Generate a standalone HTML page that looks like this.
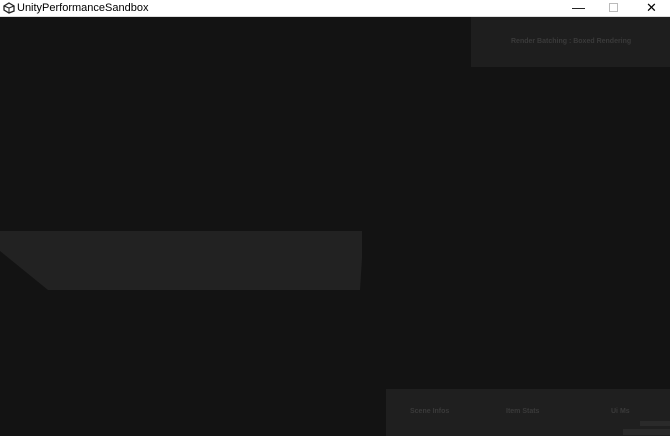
<!DOCTYPE html>
<html><head><meta charset="utf-8"><style>
*{margin:0;padding:0;box-sizing:border-box}
body{width:670px;height:436px;overflow:hidden;background:#131313;font-family:"Liberation Sans",sans-serif;position:relative}
.tb{position:absolute;left:0;top:0;width:670px;height:17px;background:#fff;border-bottom:1px solid #ddd}
.tb .t{position:absolute;left:17px;top:2px;font-size:11px;color:#000}
.p{position:absolute;background:#1e1e1e;color:#3a3a3a;font-size:7px;font-weight:bold}
</style></head><body>
<div class="tb">
<svg style="position:absolute;left:3px;top:2px" width="12" height="12" viewBox="0 0 12 12"><path d="M6 1 L11 4 L11 9 L6 11 L1 8 L1 4 Z" fill="none" stroke="#222" stroke-width="1.3"/><path d="M6 6 L11 4 M6 6 L6 11 M6 6 L1 4" stroke="#222" stroke-width="1"/></svg>
<span class="t">UnityPerformanceSandbox</span>
<span style="position:absolute;left:572px;top:0;font-size:13px">&#8212;</span>
<span style="position:absolute;left:609px;top:3px;width:9px;height:9px;border:1px solid #bbb"></span>
<span style="position:absolute;left:646px;top:0px;font-size:13px">&#10005;</span>
</div>
<div class="p" style="left:471px;top:17px;width:199px;height:50px"><span style="position:absolute;left:40px;top:21px">Render Batching : Boxed Rendering</span></div>
<div class="p" style="left:386px;top:389px;width:284px;height:47px;background:#1f1f1f">
<span style="position:absolute;left:24px;top:19px">Scene Infos</span>
<span style="position:absolute;left:120px;top:19px">Item Stats</span>
<span style="position:absolute;left:225px;top:19px">Ui Ms</span>
<div style="position:absolute;left:254px;top:32px;width:30px;height:5px;background:#2a2a2a"></div>
<div style="position:absolute;left:237px;top:40px;width:47px;height:6px;background:#2a2a2a"></div>
</div>
<svg style="position:absolute;left:0;top:0" width="670" height="436"><polygon points="0,231 362,231 362,258 360,290 48,290 0,251" fill="#222"/></svg>
</body></html>
